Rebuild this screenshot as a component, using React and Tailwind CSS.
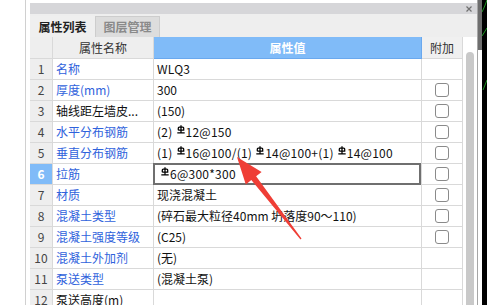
import React from "react";

const Rebar = () => (
  <svg
    width="8"
    height="9"
    viewBox="0 0 8 9"
    className="inline-block shrink-0 ml-[4px] mr-[1px] self-start mt-[3px]"
  >
    <path
      d="M4 0.3V7.6M1.3 5.2V3.1Q1.3 2.1 2.3 2.1H5.7Q6.7 2.1 6.7 3.1V5.2H1.3M0.3 7.9H7.7"
      stroke="#000"
      strokeWidth="1.25"
      fill="none"
    />
  </svg>
);

const V = ({ parts, wide }) => (
  <span
    className={`flex items-center whitespace-nowrap h-full ${
      wide ? "tracking-[0.25px]" : ""
    }`}
  >
    {parts.map((p, i) =>
      p === "R" ? <Rebar key={i} /> : <span key={i}>{p}</span>
    )}
  </span>
);

const rows = [
  { n: "名称", blue: true, v: ["WLQ3"], cb: false, wide: true },
  { n: "厚度(mm)", blue: true, v: ["300"], cb: true },
  { n: "轴线距左墙皮...", blue: false, v: ["(150)"], cb: true },
  { n: "水平分布钢筋", blue: true, v: ["(2)", "R", "12@150"], cb: true, wide: true },
  {
    n: "垂直分布钢筋",
    blue: true,
    v: ["(1)", "R", "16@100/(1)", "R", "14@100+(1)", "R", "14@100"],
    cb: true,
    wide: true,
  },
  { n: "拉筋", blue: true, v: ["R", "6@300*300"], cb: true, sel: true, wide: true },
  { n: "材质", blue: true, v: ["现浇混凝土"], cb: true },
  { n: "混凝土类型", blue: true, v: ["(碎石最大粒径40mm 坍落度90～110)"], cb: true },
  { n: "混凝土强度等级", blue: true, v: ["(C25)"], cb: true },
  { n: "混凝土外加剂", blue: true, v: ["(无)"], cb: false },
  { n: "泵送类型", blue: true, v: ["(混凝土泵)"], cb: false },
  { n: "泵送高度(m)", blue: false, v: [], cb: false },
];

const cell = "border-r border-b border-[#d9d9d9]";

export default function App() {
  return (
    <div className="relative w-[487px] h-[305px] overflow-hidden bg-white flex text-[12px] leading-none font-['Noto_Sans_CJK_SC','Noto_Sans',sans-serif] text-[#111]">
      <div className="w-[25px] shrink-0" />
      <div className="w-px shrink-0 bg-[#d0d0d0]" />
      <div className="w-[4px] shrink-0" />

      {/* Panel */}
      <div className="w-[447px] shrink-0 flex flex-col pt-[3px]">
        {/* title bar */}
        <div className="h-[11px] shrink-0 bg-[#d6d6d9] flex items-center justify-end pr-[5px]">
          <svg width="6" height="6" viewBox="0 0 6 6">
            <path d="M0.5 0.5L5.5 5.5M5.5 0.5L0.5 5.5" stroke="#707070" strokeWidth="1.2" />
          </svg>
        </div>
        {/* tabs */}
        <div className="h-[23px] shrink-0 bg-[#eeeeee] flex items-end">
          <div className="w-[65px] h-[21px] flex items-center justify-center font-bold text-[#222] bg-[#efefef]">
            属性列表
          </div>
          <div className="w-[65px] h-[21px] flex items-center justify-center font-bold text-[#8a8a8a] bg-[#dddddd] border border-b-0 border-[#cdcdcd]">
            图层管理
          </div>
        </div>
        {/* table + scrollbar */}
        <div className="flex flex-1 min-h-0">
          <div className="w-[433px] shrink-0 flex flex-col">
            <div className="grid grid-cols-[23px_101px_268px_41px] h-[22px] shrink-0">
              <div className={`${cell} bg-[#eeeeee]`} />
              <div className={`${cell} bg-[#eeeeee] flex items-center justify-center text-[#333]`}>
                属性名称
              </div>
              <div className="border-r border-b border-[#6aa8ee] bg-[#80bbf8] flex items-center justify-center text-white font-bold">
                属性值
              </div>
              <div className={`${cell} bg-[#f0f0f0] flex items-center justify-center text-[#333]`}>
                附加
              </div>
            </div>
            {rows.map((r, i) => (
              <div
                key={i}
                className="grid grid-cols-[23px_101px_268px_41px] h-[21px] shrink-0"
              >
                <div
                  className={`${cell} flex items-center justify-center ${
                    r.sel
                      ? "bg-[#80bbf8] text-white font-bold"
                      : "bg-[#eeeeee] text-[#444]"
                  }`}
                >
                  {i + 1}
                </div>
                <div
                  className={`${cell} flex items-center pl-[3px] whitespace-nowrap overflow-hidden ${
                    r.blue ? "text-[#2f62dc]" : "text-[#111]"
                  }`}
                >
                  {r.n}
                </div>
                <div className={`${cell} relative pl-[3px]`}>
                  <V parts={r.v} wide={r.wide} />
                  {r.sel && (
                    <div className="absolute -top-px -left-px right-0 bottom-[-1px] border-2 border-[#6f6f6f]" />
                  )}
                </div>
                <div className={`${cell} flex items-center justify-center`}>
                  {r.cb && (
                    <div className="w-[14px] h-[14px] rounded-[3px] border-[1.5px] border-[#8a8a8a] bg-white" />
                  )}
                </div>
              </div>
            ))}
          </div>
          <div className="w-[14px] shrink-0 pt-[15px] pl-[3px] flex flex-col">
            <div className="w-[8px] flex-1 rounded-t-full bg-[#c9c9c9]" />
          </div>
        </div>
      </div>

      <div className="w-px shrink-0 bg-[#a6a6a6]" />
      <div className="w-[4px] shrink-0 flex flex-col">
        <div className="h-[50px] bg-[#6e6e6e]" />
      </div>
      <div className="w-[5px] shrink-0 bg-black">
        <svg width="5" height="305" viewBox="0 0 5 305">
          <path d="M0 12Q3 6 5 0" stroke="#22c02a" strokeWidth="0.8" fill="none" />
          <path d="M0 36L5 28" stroke="#22c02a" strokeWidth="0.8" fill="none" />
          <path d="M1 90L5 80" stroke="#22c02a" strokeWidth="0.8" fill="none" />
        </svg>
      </div>

      {/* red arrow annotation */}
      <svg
        className="absolute left-0 top-0 pointer-events-none"
        width="487"
        height="305"
        viewBox="0 0 487 305"
      >
        <polygon
          points="237,157 261.6,172 256.1,176.3 301.5,238.6 300.5,239.4 251.3,180.1 245.8,184.4"
          fill="#ef3e36"
        />
      </svg>
    </div>
  );
}
